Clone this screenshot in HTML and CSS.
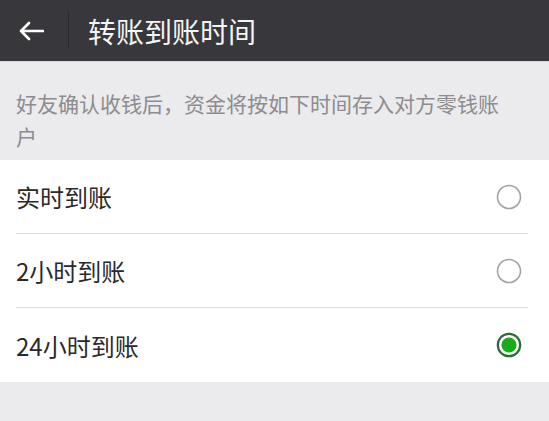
FILE: index.html
```html
<!DOCTYPE html>
<html lang="zh-CN">
  <head>
    <meta charset="UTF-8" />
    <meta name="viewport" content="width=device-width, initial-scale=1.0" />
    <title>转账到账时间</title>
    <link rel="stylesheet" href="styles.css">
  </head>
  <body>
    <header class="topbar">
      <a class="back" href="#">
        <svg width="26" height="20" viewBox="0 0 26 20">
          <path d="M25 10H3M11 2L3 10L11 18" fill="none" stroke="#fff" stroke-width="2.6" stroke-linecap="round" stroke-linejoin="round" />
        </svg>
      </a>
      <span class="sep"></span>
      <h1>转账到账时间</h1>
    </header>

    <p class="tip">好友确认收钱后，资金将按如下时间存入对方零钱账户</p>

    <div class="options">
      <label class="option">
        <span>实时到账</span>
        <svg class="radio" width="26" height="26" viewBox="0 0 26 26">
          <circle cx="13" cy="13" r="11.5" fill="none" stroke="#a3a3a3" stroke-width="1.6" />
        </svg>
      </label>
      <label class="option">
        <span>2小时到账</span>
        <svg class="radio" width="26" height="26" viewBox="0 0 26 26">
          <circle cx="13" cy="13" r="11.5" fill="none" stroke="#a3a3a3" stroke-width="1.6" />
        </svg>
      </label>
      <label class="option">
        <span>24小时到账</span>
        <svg class="radio" width="26" height="26" viewBox="0 0 26 26">
          <circle cx="13" cy="13" r="11.2" fill="none" stroke="#2f6a35" stroke-width="2.2" />
          <circle cx="13" cy="13" r="7.6" fill="#1aad19" />
        </svg>
      </label>
    </div>
  </body>
</html>
```

FILE: styles.css
```css
body {
  font-family: "Noto Sans CJK SC", "Noto Sans", sans-serif;
  background-color: #ebeaec;
  margin: 0;
  padding: 0;
}

.topbar {
  display: flex;
  align-items: center;
  height: 61px;
  background-color: #38383c;
  border-bottom: 1px solid #d8d8da;
}

.back {
  display: flex;
  margin-left: 18px;
}

.sep {
  width: 1px;
  height: 37px;
  background-color: #2a2a2d;
  margin: 0 19px 0 24px;
}

.topbar h1 {
  margin: 0;
  color: #f4f4f4;
  font-size: 28px;
  font-weight: normal;
  line-height: 1;
}

.tip {
  margin: 0;
  padding: 25px 36px 7px 16px;
  color: #8d8c8f;
  font-size: 21px;
  line-height: 33px;
}

.options {
  background-color: white;
}

.option {
  display: flex;
  align-items: center;
  justify-content: space-between;
  height: 74px;
  margin: 0 21px 0 16px;
  padding-right: 6px;
  border-bottom: 1px solid #dcdcdc;
  box-sizing: border-box;
  color: #2a2a2a;
  font-size: 24px;
}

.option:last-child {
  border-bottom: none;
}
```
